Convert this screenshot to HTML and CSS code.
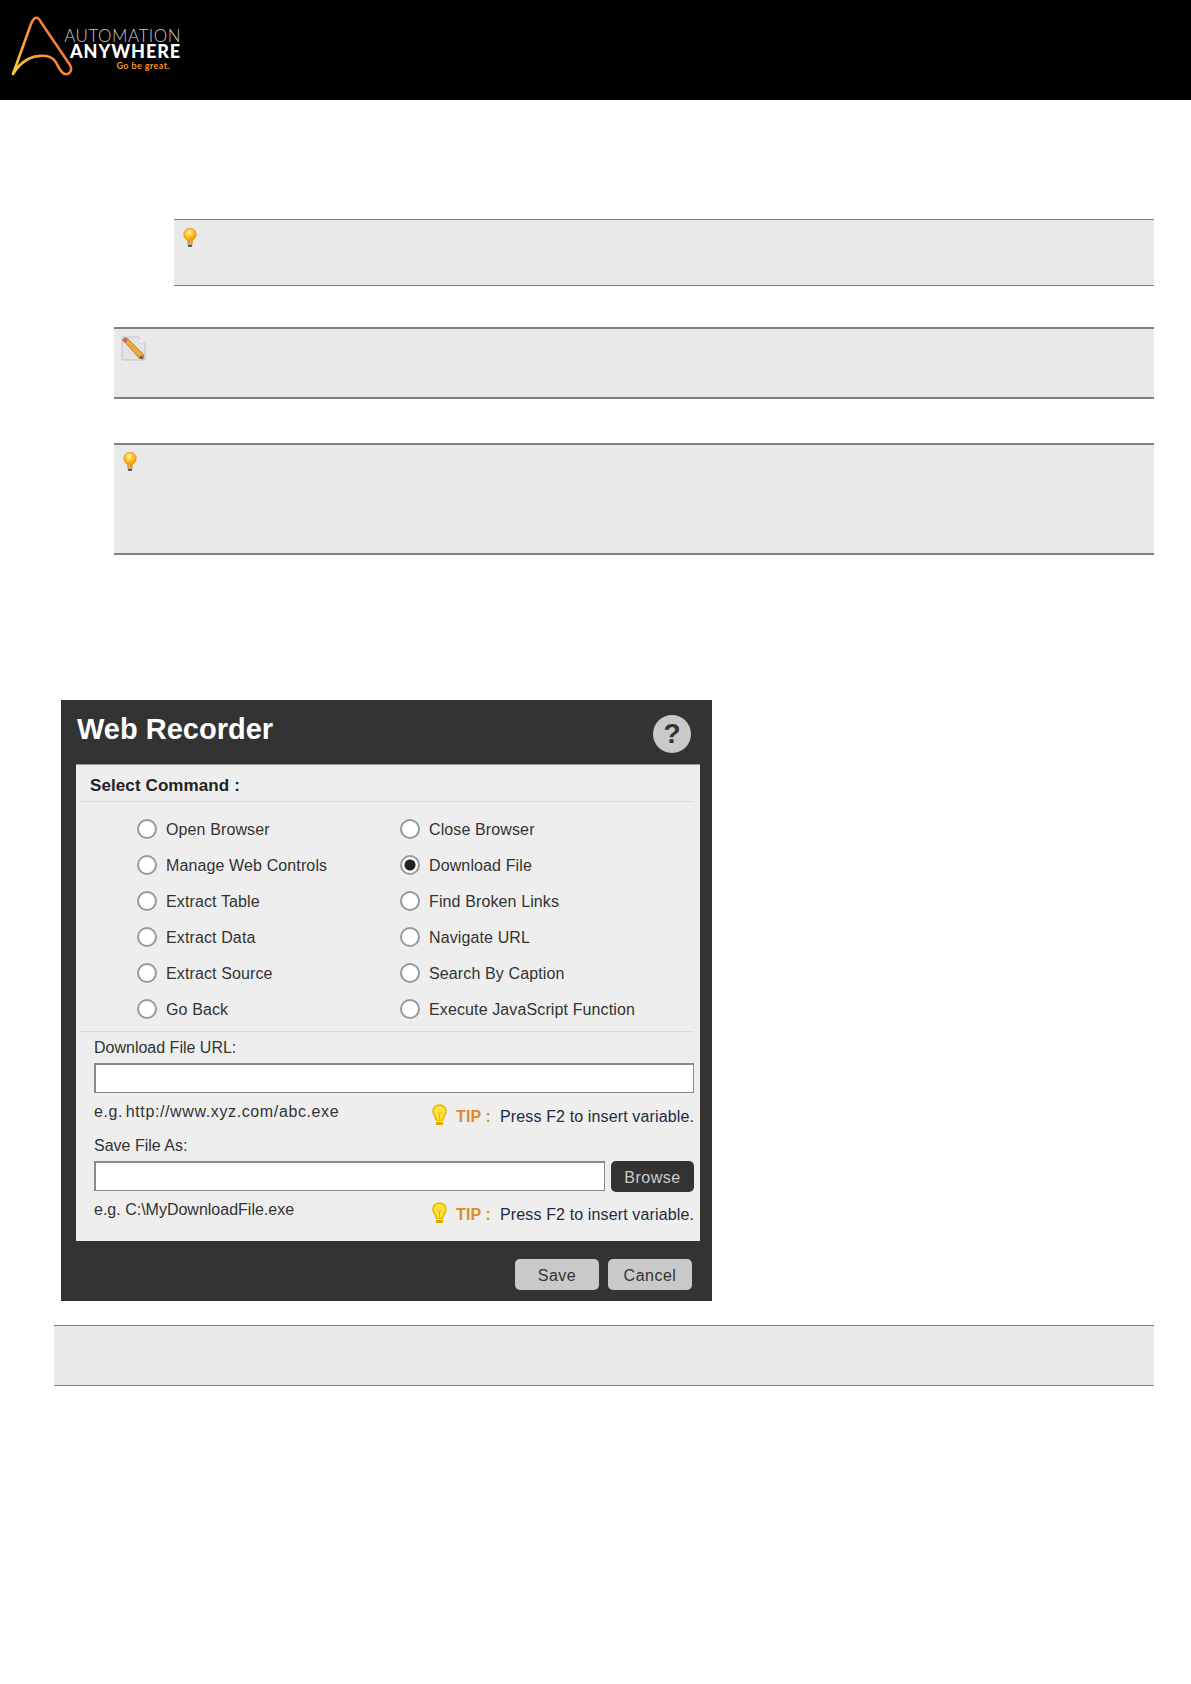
FILE: index.html
```html
<!DOCTYPE html>
<html lang="en">
<head>
    <meta charset="UTF-8">
    <meta name="viewport" content="width=device-width, initial-scale=1.0">
    <title>Web Recorder</title>
    <link rel="stylesheet" href="styles.css">
</head>
<body>
    <svg class="defs" width="0" height="0">
        <defs>
            <radialGradient id="bulbGlow" cx="45%" cy="35%" r="70%">
                <stop offset="0" stop-color="#fff6b0"/>
                <stop offset="0.45" stop-color="#ffc61e"/>
                <stop offset="1" stop-color="#f08a10"/>
            </radialGradient>
            <linearGradient id="logoStroke" gradientUnits="userSpaceOnUse" x1="0" y1="58" x2="58" y2="20">
                <stop offset="0" stop-color="#ffd23a"/>
                <stop offset="0.5" stop-color="#f9953a"/>
                <stop offset="1" stop-color="#ee6a35"/>
            </linearGradient>
            <symbol id="noteBulb" viewBox="0 0 14 19">
                <circle cx="7" cy="6.500" r="6.200" fill="url(#bulbGlow)" stroke="#f0932a" stroke-width="0.800"/>
                <rect x="4.200" y="12" width="5.600" height="3.400" fill="#e8a020"/>
                <rect x="4.400" y="15.200" width="5.200" height="2.200" fill="#a9a9a9"/>
                <rect x="5" y="17.200" width="4" height="1.400" fill="#222"/>
            </symbol>
            <symbol id="tipBulb" viewBox="0 0 15 22">
                <path d="M7.500 1C3.600 1 1 3.800 1 7.200c0 3.400 2.600 5 3.400 9h6.200c.8-4 3.400-5.600 3.400-9C14 3.800 11.400 1 7.500 1z" fill="#ffe23a" stroke="#e8b800" stroke-width="1.600"/>
                <path d="M5.500 8l2 2 2-2M7.500 10v5" fill="none" stroke="#e8b800" stroke-width="1"/>
                <rect x="4" y="18" width="7" height="3" fill="#e0a800"/>
            </symbol>
        </defs>
    </svg>

    <header class="top-bar">
        <div class="logo">
            <svg class="logo-mark" width="60" height="64" viewBox="0 0 60 64">
                <path d="M1 58 L19 8 Q24 -4 29.500 7 L58 49 C61 55 57 59 53 58 C48 57 46 49 43 45 C38 38 20 37 8 49 Q4 53 1 58" fill="none" stroke="url(#logoStroke)" stroke-width="2.600" stroke-linecap="round" stroke-linejoin="round"/>
            </svg>
            <div class="logo-text">
                <span class="logo-top">AUTOMATION</span>
                <span class="logo-main">ANYWHERE</span>
                <span class="logo-tag">Go be great.</span>
            </div>
        </div>
    </header>

    <main class="page">
        <div class="note note-tip-nested">
            <svg class="bulb"><use href="#noteBulb"/></svg>
        </div>

        <div class="note note-edit">
            <svg class="pencil" width="25" height="25" viewBox="0 0 25 25">
                <path d="M1 1h17l6 6v17H1z" fill="#e4e4e4" stroke="#c4c4c4"/>
                <path d="M18 1v6h6" fill="#f6f6f6" stroke="#cfcfcf"/>
                <path d="M3 5l3-3 17 17-1 4-4-1z" fill="#f2a93b" stroke="#a86c20" stroke-width="0.800"/>
                <path d="M1 4l3-3 3 3-3 3z" fill="#c9606a"/>
                <path d="M18 22l4 1-1-4z" fill="#555"/>
            </svg>
        </div>

        <div class="note note-tip">
            <svg class="bulb"><use href="#noteBulb"/></svg>
        </div>

        <section class="recorder">
            <div class="recorder-head">
                <h1>Web Recorder</h1>
                <span class="help">?</span>
            </div>

            <div class="panel">
                <div class="panel-title">Select Command :</div>

                <div class="commands">
                    <label class="cmd"><span class="radio"></span>Open Browser</label>
                    <label class="cmd"><span class="radio"></span>Close Browser</label>
                    <label class="cmd"><span class="radio"></span>Manage Web Controls</label>
                    <label class="cmd"><span class="radio checked"></span>Download File</label>
                    <label class="cmd"><span class="radio"></span>Extract Table</label>
                    <label class="cmd"><span class="radio"></span>Find Broken Links</label>
                    <label class="cmd"><span class="radio"></span>Extract Data</label>
                    <label class="cmd"><span class="radio"></span>Navigate URL</label>
                    <label class="cmd"><span class="radio"></span>Extract Source</label>
                    <label class="cmd"><span class="radio"></span>Search By Caption</label>
                    <label class="cmd"><span class="radio"></span>Go Back</label>
                    <label class="cmd"><span class="radio"></span>Execute JavaScript Function</label>
                </div>

                <div class="fields">
                    <div class="field-label">Download File URL:</div>
                    <div class="input-row"><div class="input"></div></div>
                    <div class="hint-row">
                        <span class="example url">e.g. http://www.xyz.com/abc.exe</span>
                        <span class="tip">
                            <svg class="tip-bulb"><use href="#tipBulb"/></svg>
                            <b>TIP :</b>
                            <span>Press F2 to insert variable.</span>
                        </span>
                    </div>

                    <div class="field-label second">Save File As:</div>
                    <div class="input-row">
                        <div class="input"></div>
                        <span class="browse">Browse</span>
                    </div>
                    <div class="hint-row">
                        <span class="example">e.g. C:\MyDownloadFile.exe</span>
                        <span class="tip">
                            <svg class="tip-bulb"><use href="#tipBulb"/></svg>
                            <b>TIP :</b>
                            <span>Press F2 to insert variable.</span>
                        </span>
                    </div>
                </div>
            </div>

            <div class="actions">
                <span class="btn">Save</span>
                <span class="btn">Cancel</span>
            </div>
        </section>

        <div class="note note-plain"></div>
    </main>
</body>
</html>
```

FILE: styles.css
```css
* {
    box-sizing: border-box;
}

body {
    margin: 0;
    min-height: 100vh;
    background: #fff;
    font-family: "Liberation Sans", Arial, sans-serif;
    color: #333;
}

.defs {
    position: absolute;
}

/* header */
.top-bar {
    height: 100px;
    background: #000;
    padding: 16px 0 0 12px;
}

.logo {
    display: flex;
}

.logo-mark {
    flex: none;
    overflow: visible;
}

.logo-text {
    display: flex;
    flex-direction: column;
    align-items: flex-end;
    width: 121px;
    margin-left: -12px;
    padding-top: 12px;
    font-family: Lato, sans-serif;
}

.logo-top {
    font-size: 17px;
    font-weight: 300;
    line-height: 15px;
    letter-spacing: 0.5px;
    color: #c8c8c8;
}

.logo-main {
    font-size: 18px;
    font-weight: 900;
    line-height: 17px;
    letter-spacing: 0.9px;
    color: #fff;
}

.logo-tag {
    margin-right: 11px;
    font-size: 9px;
    font-weight: 700;
    line-height: 11px;
    letter-spacing: 0.4px;
    color: #f7941d;
}

/* grey notes */
.page {
    padding-top: 119px;
}

.note {
    margin-right: 37px;
    background: #e9e9e9;
    border-top: 1px solid #808080;
    border-bottom: 1px solid #808080;
}

.note-tip-nested {
    height: 67px;
    margin-left: 174px;
    padding: 8px 0 0 9px;
}

.note-edit {
    height: 72px;
    margin-top: 41px;
    margin-left: 114px;
    padding: 7px 0 0 7px;
    border-top-width: 2px;
    border-bottom-width: 2px;
}

.note-tip {
    height: 112px;
    margin-top: 44px;
    margin-left: 114px;
    padding: 7px 0 0 9px;
    border-top-width: 2px;
    border-bottom-width: 2px;
}

.note-plain {
    height: 61px;
    margin-top: 24px;
    margin-left: 54px;
}

.bulb {
    display: block;
    width: 14px;
    height: 19px;
}

.pencil {
    display: block;
}

/* dialog */
.recorder {
    width: 651px;
    height: 601px;
    margin: 145px 0 0 61px;
    padding: 0 12px 0 15px;
    background: #333;
}

.recorder-head {
    display: flex;
    justify-content: space-between;
    height: 64px;
    padding: 12px 9px 0 1px;
}

.recorder-head h1 {
    margin: 0;
    font-size: 29px;
    line-height: 34px;
    font-weight: bold;
    color: #fff;
}

.help {
    width: 38px;
    height: 38px;
    margin-top: 3px;
    border-radius: 50%;
    background: #c9c9c9;
    color: #333;
    font-size: 28px;
    font-weight: bold;
    line-height: 38px;
    text-align: center;
}

.panel {
    height: 477px;
    padding: 0 6px 0 4px;
    background: #eee;
    border-top: 1px solid #999;
}

.panel-title {
    height: 37px;
    padding-left: 10px;
    border-bottom: 1px solid #dcdcc8;
    font-size: 17px;
    font-weight: bold;
    line-height: 42px;
    letter-spacing: 0.1px;
    color: #222;
}

.commands {
    display: grid;
    grid-template-columns: 263px 1fr;
    grid-auto-rows: 36px;
    height: 230px;
    padding: 9px 0 0 57px;
    border-bottom: 1px solid #dcdcc8;
}

.cmd {
    display: flex;
    align-items: center;
    gap: 9px;
    padding-top: 2px;
    font-size: 16px;
    letter-spacing: 0.12px;
}

.radio {
    flex: none;
    width: 20px;
    height: 20px;
    margin-bottom: 2px;
    border: 2px solid #999;
    border-radius: 50%;
    background: #fff;
}

.radio.checked {
    background: radial-gradient(circle, #222 0 5px, #fff 6px);
}

.fields {
    padding: 6px 0 0 14px;
}

.field-label {
    font-size: 16px;
    line-height: 20px;
}

.field-label.second {
    margin-top: 2px;
}

.input-row {
    display: flex;
    gap: 6px;
    height: 31px;
    margin-top: 5px;
}

.input {
    flex: 1;
    height: 30px;
    background: #fff;
    border: 2px solid #8a8a8a;
    border-right-width: 1px;
    border-bottom-width: 1px;
}

.browse {
    width: 83px;
    border-radius: 5px;
    background: #333;
    color: #ccc;
    font-size: 16px;
    line-height: 33px;
    letter-spacing: 0.5px;
    text-align: center;
}

.hint-row {
    display: flex;
    justify-content: space-between;
    height: 33px;
    margin-top: 7px;
}

.example {
    line-height: 22px;
    font-size: 16px;
}

.example.url {
    letter-spacing: 0.62px;
    word-spacing: -2.5px;
}

.tip {
    display: flex;
    align-items: center;
    height: 24px;
    margin-top: 4px;
    font-size: 16px;
    letter-spacing: 0.13px;
    white-space: nowrap;
}

.tip b {
    margin: 0 9px 0 9px;
    color: #e08a2c;
}

.tip span {
    color: #1f2a44;
}

.tip-bulb {
    width: 15px;
    height: 22px;
    margin-top: -4px;
}

.actions {
    display: flex;
    justify-content: flex-end;
    gap: 9px;
    padding: 18px 8px 0 0;
}

.btn {
    width: 84px;
    height: 31px;
    border-radius: 5px;
    background: #c9c9c9;
    font-size: 16px;
    line-height: 33px;
    letter-spacing: 0.5px;
    text-align: center;
}
```
